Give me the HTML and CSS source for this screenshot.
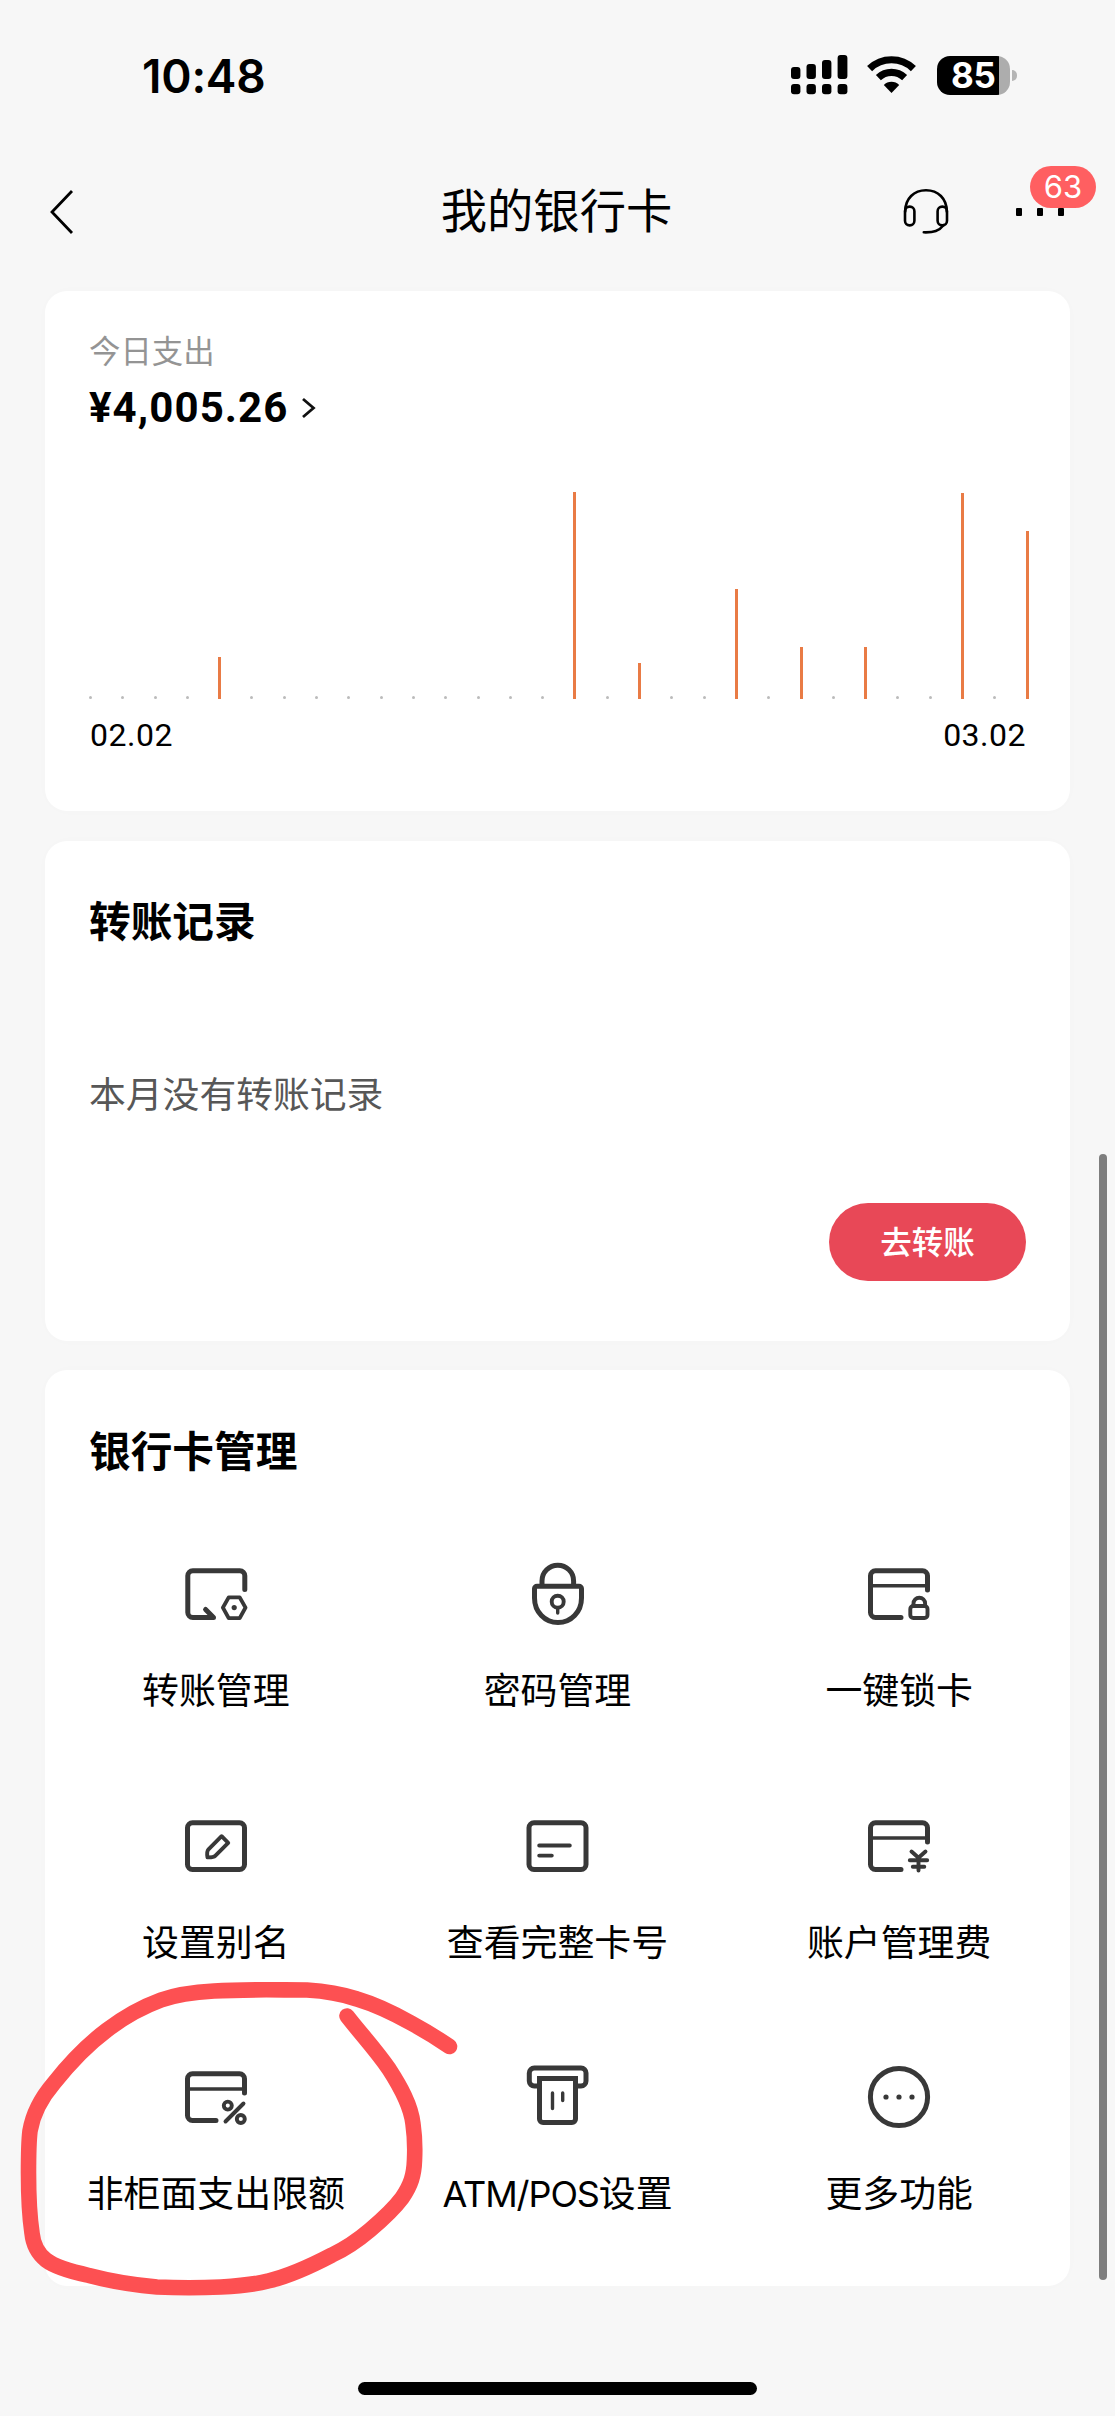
FILE: index.html
```html
<!DOCTYPE html>
<html lang="zh-CN">
<head>
<meta charset="utf-8">
<title>我的银行卡</title>
<link rel="stylesheet" href="styles.css">
</head>
<body>
<div class="screen">
  <header class="status">
    <time class="clock">10:48</time>
    <div class="indicators">
      <svg class="signal" width="57" height="40" viewBox="0 0 57 40">
        <rect x="0" y="12" width="9.4" height="12" rx="3"/><rect x="15.5" y="9" width="9.4" height="15" rx="3"/><rect x="31" y="5" width="9.4" height="19" rx="3"/><rect x="46.6" y="0" width="9.8" height="24" rx="3"/>
        <rect x="0" y="29" width="9.4" height="10.2" rx="3"/><rect x="15.5" y="29" width="9.4" height="10.2" rx="3"/><rect x="31" y="29" width="9.4" height="10.2" rx="3"/><rect x="46.6" y="29" width="9.8" height="10.2" rx="3"/>
      </svg>
      <svg class="wifi" width="50" height="40" viewBox="0 0 50 40">
        <path class="wave" d="M2.6 13.6a31.5 31.5 0 0 1 43.8 0M11.4 22.7a19 19 0 0 1 26.2 0"/>
        <path d="M24.5 38 16.8 30a11 11 0 0 1 15.4 0z"/>
      </svg>
      <div class="battery"><span class="level">85</span></div><i class="nub"></i>
    </div>
  </header>

  <nav class="nav">
    <svg class="back" width="26" height="46" viewBox="0 0 26 46"><path d="M23 2 3 23l20 21"/></svg>
    <h1 class="title">我的银行卡</h1>
    <div class="actions">
      <svg class="headset" width="52" height="52" viewBox="0 0 52 52">
        <rect x="5" y="20.6" width="9.4" height="18.8" rx="4.6"/><rect x="37.6" y="20.6" width="9.4" height="18.8" rx="4.6"/>
        <path d="M5.2 25.5C5.2 12.5 14 4.3 26 4.3s20.8 8.2 20.8 21.2M43.5 39.2C39 45 34 46.6 23.8 46.3"/>
      </svg>
      <div class="more"><i></i><i></i><i></i><span class="badge">63</span></div>
    </div>
  </nav>

  <main class="cards">
    <section class="card spend">
      <p class="spend-label">今日支出</p>
      <p class="amount">¥4,005.26 <svg width="16" height="22" viewBox="0 0 16 22"><path d="M2 2l10.500 9L2 20"/></svg></p>
      <div class="chart">
        <i></i><i></i><i></i><i></i><b style="height:42px"></b><i></i><i></i><i></i><i></i><i></i><i></i><i></i><i></i><i></i><i></i><b style="height:207px"></b><i></i><b style="height:36px"></b><i></i><i></i><b style="height:110px"></b><i></i><b style="height:52px"></b><i></i><b style="height:52px"></b><i></i><i></i><b style="height:206px"></b><i></i><b style="height:168px"></b>
      </div>
      <div class="axis"><span>02.02</span><span>03.02</span></div>
    </section>

    <section class="card transfer">
      <h2>转账记录</h2>
      <p class="empty">本月没有转账记录</p>
      <button class="go" type="button">去转账</button>
    </section>

    <section class="card manage">
      <h2>银行卡管理</h2>
      <div class="grid">
        <a class="item"><svg viewBox="0 0 68 68"><path d="M62.800 29.500V15.700a5 5 0 0 0-5-5H10.800a5 5 0 0 0-5 5v36.800a5 5 0 0 0 5 5H31.500L23.600 49.500"/><path class="m" d="M46.700 37.400h11l5.800 10.200-5.800 10.500h-11l-5.800-10.500z"/><circle class="f" cx="52.200" cy="47.600" r="2.600"/></svg><span>转账管理</span></a>
        <a class="item"><svg viewBox="0 0 68 68"><path d="M14 26.300H56a2.500 2.500 0 0 1 2.500 2.500V38c0 14-10.500 24.600-23.500 24.600S11.500 52 11.500 38V28.800a2.500 2.500 0 0 1 2.500-2.500zM19 25.500V21a15.800 15.800 0 0 1 31.600 0v4.500"/><circle class="m" cx="34.700" cy="41.700" r="6"/><path class="t" d="M34.700 48v5"/></svg><span>密码管理</span></a>
        <a class="item"><svg viewBox="0 0 68 68"><path d="M62.500 30V15.700a5 5 0 0 0-5-5H10.500a5 5 0 0 0-5 5v36.800a5 5 0 0 0 5 5H36"/><path class="t" d="M6 25.700H62"/><rect class="m" x="45.300" y="46" width="17.200" height="12" rx="3"/><path class="m" d="M48.500 45v-1.500a5.800 5.800 0 0 1 11.600 0V45"/></svg><span>一键锁卡</span></a>
        <a class="item"><svg viewBox="0 0 68 68"><rect x="5.500" y="10.800" width="57" height="46.700" rx="5"/><path class="m" d="M39.600 24.200l6.600 6.600-13 13.100c-1 1-4.500 1.600-7.700 1.500-.6-3.500 0-7 1-8.100z"/></svg><span>设置别名</span></a>
        <a class="item"><svg viewBox="0 0 68 68"><rect x="6" y="10.800" width="57" height="46.700" rx="5"/><path class="m" d="M16.200 33.500H46.800M16.200 43.600h12.600"/></svg><span>查看完整卡号</span></a>
        <a class="item"><svg viewBox="0 0 68 68"><path d="M62.500 30V15.700a5 5 0 0 0-5-5H10.500a5 5 0 0 0-5 5v36.800a5 5 0 0 0 5 5H36"/><path class="t" d="M6 26H62"/><path class="m" d="M46.500 39.500l7 6.300 7-6.300M44.800 48.300h17.400M47.800 54.800h11.500M53.500 46v12.500"/></svg><span>账户管理费</span></a>
        <a class="item"><svg viewBox="0 0 68 68"><path d="M62.500 30V15.700a5 5 0 0 0-5-5H10.500a5 5 0 0 0-5 5v36.800a5 5 0 0 0 5 5H34"/><path class="t" d="M6 26H62"/><circle class="m" cx="45.800" cy="42.600" r="4"/><circle class="m" cx="58.800" cy="56" r="4"/><path class="m" d="M43.500 58.500L61.500 40.500"/></svg><span>非柜面支出限额</span></a>
        <a class="item"><svg viewBox="0 0 68 68"><path d="M16.500 23h-5A5 5 0 0 1 6.300 18V10a5 5 0 0 1 5-5H58a5 5 0 0 1 5 5v8a5 5 0 0 1-5 5h-5.300"/><path d="M16.500 15.600H52.500V56a3.600 3.600 0 0 1-3.600 3.600H20.100A3.600 3.600 0 0 1 16.500 56z" stroke-linejoin="miter"/><path class="t" d="M29.500 30v15.500M39.700 30v7.500"/></svg><span><em>ATM/POS</em>设置</span></a>
        <a class="item"><svg viewBox="0 0 68 68"><circle cx="34" cy="34" r="28.600"/><circle class="f" cx="21" cy="34" r="2.600"/><circle class="f" cx="34" cy="34" r="2.600"/><circle class="f" cx="47" cy="34" r="2.600"/></svg><span>更多功能</span></a>
      </div>
    </section>
  </main>

  <svg class="marker" width="480" height="330" viewBox="0 1975 480 330"><path d="M347 2016C361 2034 376 2050 389 2069C400 2086 411 2105 413 2124C415 2138 415 2150 414.500 2160C414 2175 411 2185 402 2198C393 2210 383 2219 370 2230C357 2241 347 2248 332 2255C311 2266 290 2276 268 2281C253 2285 238 2286 221 2287C200 2288 178 2288 157 2287C134 2285 110 2281 89 2275.500C73 2272 55 2267 46 2260C36 2252 33 2243 32 2233C29 2213 28.500 2195 28.500 2173C28.500 2157 28.500 2143 30 2131C33 2113 42 2097 54 2083C69 2064 87 2045 107 2030C124 2017 142 2007 161 2000C178 1994 196 1992 214 1991C245 1989 277 1990 307 1990C325 1991 342 1994 357 1999C377 2005 395 2014 411 2023C424 2030 437 2038 449.500 2046.500"/></svg>
  <i class="scrollbar"></i>
  <i class="home"></i>
</div>
</body>
</html>
```

FILE: styles.css
```css
* { box-sizing: border-box; margin: 0; padding: 0; }

body {
  background: #f7f7f7;
  color: #000;
  font-family: "Noto Sans CJK SC", sans-serif;
}

.screen {
  position: relative;
  width: 1115px;
  height: 2416px;
  overflow: hidden;
}

svg { display: block; flex: none; }
i, em { font-style: normal; }

/* status bar */
.status {
  height: 150px;
  padding: 0 98px 0 142px;
  display: flex;
  justify-content: space-between;
  align-items: center;
}
.clock { font: 600 46px/56px Inter, sans-serif; letter-spacing: -0.2px; padding-top: 2px; }
.indicators { display: flex; align-items: center; }
.signal { margin-right: 19px; }
.wifi { margin-right: 20px; }
.wave { fill: none; stroke: #000; stroke-width: 7.2; }
.battery {
  width: 73px;
  height: 39px;
  border-radius: 13px;
  background: linear-gradient(90deg, #000 62px, #adadad 62px);
  padding-left: 14px;
}
.level { color: #fff; font: 700 35px/39px Inter, sans-serif; letter-spacing: -0.3px; }
.nub { width: 5px; height: 11px; margin-left: 2px; border-radius: 0 5px 5px 0; background: #b5b5b5; }

/* navigation */
.nav {
  height: 141px;
  padding: 2px 51px 20px 49px;
  display: grid;
  grid-template-columns: 1fr auto 1fr;
  align-items: center;
}
.back { fill: none; stroke: #000; stroke-width: 2.8; }
.title { font-weight: 400; font-size: 46.3px; line-height: 60px; padding-bottom: 8px; }
.actions { display: flex; justify-content: flex-end; align-items: center; }
.headset { fill: none; stroke: #000; stroke-width: 2.6; stroke-linecap: round; }
.more { position: relative; display: flex; gap: 15px; margin-left: 64px; }
.more i { width: 6px; height: 8px; background: #000; border-radius: 1px; }
.badge {
  position: absolute;
  left: 14px;
  top: -42px;
  width: 66px;
  height: 42px;
  border-radius: 21px;
  background: #ff5f61;
  color: #fff;
  font: 400 31px/42px Inter, sans-serif;
  text-align: center;
}

/* cards */
.cards { padding: 0 45px; display: flex; flex-direction: column; gap: 29.5px; }
.card {
  background: #fff;
  border-radius: 22px;
  padding: 0 44px;
  box-shadow: 0 0 20px rgba(0, 0, 0, .012);
}
h2 { font-weight: 700; font-size: 41.7px; line-height: 60px; }

.spend { height: 520px; padding-top: 36px; }
.spend-label { font-size: 31.4px; line-height: 46px; color: #949494; }
.amount {
  display: flex;
  align-items: center;
  gap: 12px;
  margin-top: 8px;
  font: 700 42px/54px Roboto, sans-serif;
  letter-spacing: 1.1px;
}
.amount svg { fill: none; stroke: #111; stroke-width: 2.8; }
.chart {
  height: 218px;
  margin: 46px -3px 0 0;
  display: flex;
  justify-content: space-between;
  align-items: flex-end;
}
.chart i { width: 3px; height: 3px; border-radius: 50%; background: #bbb; }
.chart b { width: 3px; background: #e97b45; }
.axis {
  display: flex;
  justify-content: space-between;
  margin-top: 16px;
  padding: 0 0 0 1px;
  font: 400 32px/40px Roboto, sans-serif;
  letter-spacing: .5px;
}

.transfer { height: 500px; padding-top: 48px; display: flex; flex-direction: column; }
.empty { margin-top: 115px; font-size: 36.8px; line-height: 56px; color: #575757; }
.go {
  width: 197px;
  height: 78px;
  margin: 83.500px 0 0 auto;
  padding-bottom: 3px;
  border: 0;
  border-radius: 39px;
  background: #e84857;
  color: #fff;
  font: 500 31.5px/75px "Noto Sans CJK SC", sans-serif;
}

.manage { height: 915.5px; padding-top: 49px; }
.grid {
  margin: 81px -44px 0;
  display: grid;
  grid-template-columns: repeat(3, 1fr);
  grid-auto-rows: 251.7px;
}
.item { display: flex; flex-direction: column; align-items: center; }
.item svg {
  width: 68px;
  height: 68px;
  fill: none;
  stroke: #383838;
  stroke-width: 5;
  stroke-linecap: round;
  stroke-linejoin: round;
}
.item .m { stroke-width: 3.9; }
.item .t { stroke-width: 3.4; }
.item .f { fill: #383838; stroke: none; }
.item span { margin-top: 32px; font-size: 36.9px; line-height: 56px; white-space: nowrap; }
.item em { font-family: Inter, sans-serif; font-size: 36px; letter-spacing: -1.1px; }

/* overlays */
.marker {
  position: absolute;
  left: 0;
  top: 1975px;
  fill: none;
  stroke: #fd5052;
  stroke-width: 15.6;
  stroke-linecap: round;
  stroke-linejoin: round;
}
.scrollbar { position: absolute; left: 1099px; top: 1154px; width: 8px; height: 1126px; border-radius: 4px; background: #7e7e7e; }
.home { position: absolute; left: 358px; top: 2382px; width: 399px; height: 13px; border-radius: 7px; background: #000; }
```
